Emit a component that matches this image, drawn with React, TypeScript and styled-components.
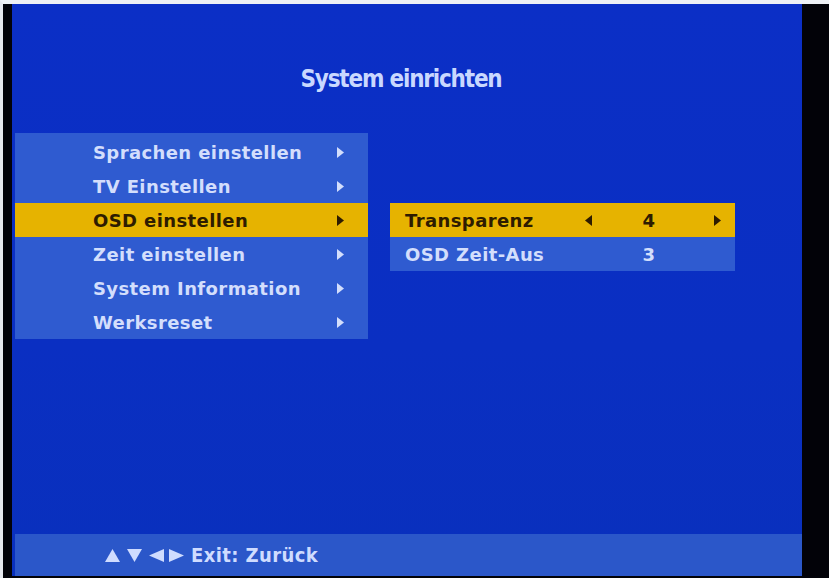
import React from "react";
import styled, { createGlobalStyle } from "styled-components";

const GlobalStyle = createGlobalStyle`
  html, body {
    margin: 0;
    padding: 0;
    background: #000;
  }
`;

const Screen = styled.div`
  width: 829px;
  height: 578px;
  box-sizing: border-box;
  display: flex;
  background: #020208;
  border-top: 4px solid #eef1f6;
  border-left: 3px solid #e6e8ee;
  padding: 0 27px 2px 9px;
`;

const Tv = styled.div`
  flex: 1;
  display: flex;
  flex-direction: column;
  background: linear-gradient(180deg, #0b2fc6 0%, #0a2fc2 60%, #0930bd 100%);
`;

const Header = styled.div`
  height: 129px;
  display: flex;
  justify-content: center;
  padding-top: 59px;
  box-sizing: border-box;
`;

const Title = styled.h1`
  margin: 0;
  font-family: "DejaVu Sans Condensed", "Liberation Sans", sans-serif;
  font-weight: 700;
  font-size: 24px;
  line-height: 32px;
  letter-spacing: -1.2px;
  color: #c9d8ff;
  padding-right: 12px;
`;

const Body = styled.div`
  display: flex;
  align-items: flex-start;
  padding-left: 3px;
  gap: 22px;
`;

const MainMenu = styled.ul`
  list-style: none;
  margin: 0;
  width: 353px;
  padding: 2px 0 0;
  background: #2f5bd0;
`;

const MenuRow = styled.li<{ $active?: boolean }>`
  height: 34px;
  display: flex;
  align-items: center;
  justify-content: space-between;
  padding: 0 24px 0 78px;
  background: ${(p) => (p.$active ? "#e6b300" : "transparent")};
  color: ${(p) => (p.$active ? "#2e1c00" : "#d3defc")};
  font-family: "DejaVu Sans", "Verdana", sans-serif;
  font-weight: 700;
  font-size: 18px;
  letter-spacing: 0.4px;
`;

const SubMenu = styled.div`
  width: 345px;
  margin-top: 70px;
  background: #2f5bd0;
`;

const SubRow = styled.div<{ $active?: boolean }>`
  height: 34px;
  display: grid;
  grid-template-columns: 180px 7px 1fr 7px;
  align-items: center;
  padding: 0 14px 0 15px;
  background: ${(p) => (p.$active ? "#e6b300" : "transparent")};
  color: ${(p) => (p.$active ? "#2e1c00" : "#d3defc")};
  font-family: "DejaVu Sans", "Verdana", sans-serif;
  font-weight: 700;
  font-size: 18px;
  letter-spacing: 0.4px;
`;

const Value = styled.span`
  text-align: center;
  padding-right: 8px;
`;

const Footer = styled.div`
  margin-top: auto;
  margin-left: 3px;
  height: 42px;
  display: flex;
  align-items: center;
  gap: 7px;
  padding-left: 90px;
  background: #2b57c9;
  color: #cfdcff;
  font-family: "DejaVu Sans Condensed", "Liberation Sans", sans-serif;
  font-weight: 700;
  font-size: 20px;
  letter-spacing: 0.4px;
`;

const Keys = styled.span`
  display: flex;
  align-items: center;
  gap: 7px;
  & > svg:nth-child(4) {
    margin-left: -2px;
  }
`;

function Tri({ dir, w, h }: { dir: "left" | "right" | "up" | "down"; w: number; h: number }) {
  const pts = {
    right: `0,0 ${w},${h / 2} 0,${h}`,
    left: `${w},0 0,${h / 2} ${w},${h}`,
    up: `0,${h} ${w / 2},0 ${w},${h}`,
    down: `0,0 ${w / 2},${h} ${w},0`,
  }[dir];
  return (
    <svg width={w} height={h} viewBox={`0 0 ${w} ${h}`} style={{ display: "block" }}>
      <polygon points={pts} fill="currentColor" />
    </svg>
  );
}

const menu = [
  "Sprachen einstellen",
  "TV Einstellen",
  "OSD einstellen",
  "Zeit einstellen",
  "System Information",
  "Werksreset",
];

export default function App() {
  return (
    <>
      <GlobalStyle />
      <Screen>
        <Tv>
          <Header>
            <Title>System einrichten</Title>
          </Header>
          <Body>
            <MainMenu>
              {menu.map((m, i) => (
                <MenuRow key={m} $active={i === 2}>
                  <span>{m}</span>
                  <Tri dir="right" w={7} h={11} />
                </MenuRow>
              ))}
            </MainMenu>
            <SubMenu>
              <SubRow $active>
                <span>Transparenz</span>
                <Tri dir="left" w={7} h={11} />
                <Value>4</Value>
                <Tri dir="right" w={7} h={11} />
              </SubRow>
              <SubRow>
                <span>OSD Zeit-Aus</span>
                <span />
                <Value>3</Value>
                <span />
              </SubRow>
            </SubMenu>
          </Body>
          <Footer>
            <Keys>
              <Tri dir="up" w={15} h={13} />
              <Tri dir="down" w={15} h={13} />
              <Tri dir="left" w={15} h={13} />
              <Tri dir="right" w={15} h={13} />
            </Keys>
            <span>Exit: Zurück</span>
          </Footer>
        </Tv>
      </Screen>
    </>
  );
}
